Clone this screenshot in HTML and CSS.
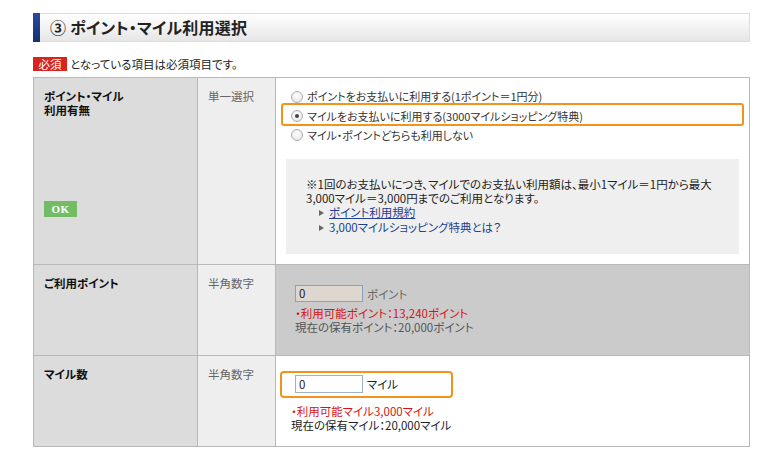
FILE: index.html
```html
<!DOCTYPE html>
<html lang="ja">
<head>
<meta charset="utf-8">
<title>ポイント・マイル利用選択</title>
<link rel="stylesheet" href="styles.css">
</head>
<body>
<div class="page">
  <div class="heading">
    <span class="heading-bar"></span>
    <h2 class="heading-title">③ ポイント・マイル利用選択</h2>
  </div>
  <p class="req-note"><span class="req-badge">必須</span>となっている項目は必須項目です。</p>
  <table class="form-table">
    <colgroup>
      <col class="col-label">
      <col class="col-type">
      <col class="col-field">
    </colgroup>
    <tr class="row-use">
      <th class="label">
        <div class="label-text">ポイント・マイル<br>利用有無</div>
        <span class="ok">OK</span>
      </th>
      <td class="type">単一選択</td>
      <td class="field field-options">
        <div class="option opt-first"><span class="radio"></span>ポイントをお支払いに利用する(1ポイント＝1円分)</div>
        <div class="option opt-selected"><span class="radio checked"></span>マイルをお支払いに利用する(3000マイルショッピング特典)</div>
        <div class="option opt-last"><span class="radio"></span>マイル・ポイントどちらも利用しない</div>
        <div class="note">
          <p class="note-text">※1回のお支払いにつき、マイルでのお支払い利用額は、最小1マイル＝1円から最大<br>3,000マイル＝3,000円までのご利用となります。</p>
          <ul class="note-links">
            <li><a class="link underline" href="#">ポイント利用規約</a></li>
            <li><a class="link" href="#">3,000マイルショッピング特典とは？</a></li>
          </ul>
        </div>
      </td>
    </tr>
    <tr class="row-points">
      <th class="label"><div class="label-text">ご利用ポイント</div></th>
      <td class="type">半角数字</td>
      <td class="field field-points">
        <div class="input-line"><span class="input input-disabled">0</span><span class="unit unit-gray">ポイント</span></div>
        <p class="avail">・利用可能ポイント：13,240ポイント</p>
        <p class="own own-gray">現在の保有ポイント：20,000ポイント</p>
      </td>
    </tr>
    <tr class="row-miles">
      <th class="label"><div class="label-text">マイル数</div></th>
      <td class="type">半角数字</td>
      <td class="field field-miles">
        <div class="input-box"><span class="input input-active">0</span><span class="unit">マイル</span></div>
        <p class="avail avail-miles">・利用可能マイル3,000マイル</p>
        <p class="own">現在の保有マイル：20,000マイル</p>
      </td>
    </tr>
  </table>
</div>
</body>
</html>
```
FILE: styles.css
```css
* { box-sizing: border-box; }
html, body { margin: 0; padding: 0; background: #fff; }
body {
  font-family: "Noto Sans CJK JP", "Noto Sans", sans-serif;
  font-size: 11.5px;
  color: #333;
  font-feature-settings: "palt";
}
.page {
  padding-left: 33px;
  width: 750px;
}
.heading {
  margin-top: 13px;
  height: 29px;
  display: flex;
  align-items: stretch;
  border: 1px solid #dcdcdc;
  border-left: none;
  background: linear-gradient(#ffffff, #e6e6e6);
}
.heading-bar {
  width: 7px;
  margin: -1px 0;
  background: linear-gradient(#2a4aa0, #14306f);
}
.heading-title {
  margin: 0;
  padding-left: 10px;
  font-size: 16px;
  font-weight: bold;
  line-height: 27px;
  color: #222;
  letter-spacing: 0.2px;
}
.req-note {
  margin: 15px 0 0;
  height: 14px;
  display: flex;
  align-items: center;
  line-height: 14px;
  color: #222;
}
.req-badge {
  display: inline-block;
  width: 34px;
  height: 14px;
  margin-right: 3px;
  background: #d8231f;
  color: #fff;
  text-align: center;
  line-height: 14px;
}
.form-table {
  margin-top: 6px;
  width: 717px;
  border-collapse: collapse;
  table-layout: fixed;
  border: 1px solid #b3b3b3;
}
.col-label { width: 164px; }
.col-type { width: 78px; }
.form-table th, .form-table td {
  border: 1px solid #b8b8b8;
  vertical-align: top;
  text-align: left;
  padding: 0;
}
.label {
  background: #dcdcdc;
  padding: 11px 10px 0 !important;
  font-weight: bold;
  color: #111;
  line-height: 14px;
}
.type {
  background: #eeeeee;
  color: #666;
  padding: 11px 10px 0 !important;
  line-height: 14px;
}
.row-use { height: 187px; }
.row-points { height: 91px; }
.row-miles { height: 91px; }
.ok {
  display: block;
  width: 33px;
  height: 16px;
  margin-top: 84px;
  background: #72bd64;
  color: #fff;
  font-family: "Liberation Serif", serif;
  font-weight: bold;
  font-size: 11px;
  line-height: 16px;
  text-align: center;
  letter-spacing: 0.5px;
}
.field-options { padding: 12px 5px 9px !important; }
.option {
  display: flex;
  align-items: center;
  padding-left: 10px;
  color: #333;
  white-space: nowrap;
  font-size: 11px;
}
.opt-first { height: 13px; line-height: 13px; }
.opt-selected {
  height: 23px;
  border: 2px solid #f2931c;
  border-radius: 3px;
  padding-left: 8px;
  padding-top: 3px;
}
.opt-last { height: 16px; padding-top: 2px; }
.radio {
  display: inline-block;
  width: 12px;
  height: 12px;
  border-radius: 50%;
  border: 1px solid #b0b0b0;
  background: radial-gradient(circle at 50% 40%, #ffffff, #e2e2e2);
  margin-right: 4px;
  flex: none;
  position: relative;
}
.radio.checked::after {
  content: "";
  position: absolute;
  left: 3px;
  top: 3px;
  width: 4px;
  height: 4px;
  border-radius: 50%;
  background: #444;
}
.note {
  margin: 17px 5px 0;
  background: #efefef;
  padding: 18px 20px 19px;
}
.note-text {
  margin: 0;
  line-height: 14px;
  color: #222;
  white-space: nowrap;
}
.note-links {
  list-style: none;
  margin: 0;
  padding: 0 0 0 13px;
}
.note-links li {
  line-height: 15px;
  display: flex;
  align-items: center;
}
.note-links li::before {
  content: "";
  width: 0;
  height: 0;
  border-left: 5px solid #666;
  border-top: 3px solid transparent;
  border-bottom: 3px solid transparent;
  margin-right: 5px;
}
.link {
  color: #23408e;
  text-decoration: none;
}
.link.underline { text-decoration: underline; }
.field-points {
  background: #cbcbcb;
  padding: 20px 0 0 19px !important;
}
.input-line {
  display: flex;
  align-items: center;
  height: 17px;
}
.input {
  display: inline-block;
  width: 68px;
  height: 17px;
  padding-left: 3px;
  line-height: 15px;
  color: #222;
}
.input-disabled {
  background: #ddd7cf;
  border: 1px solid #8aa2bb;
}
.input-active {
  height: 18px;
  line-height: 16px;
  background: #fff;
  border: 1px solid #9fb3c8;
}
.unit {
  margin-left: 4px;
  color: #222;
}
.unit-gray { color: #666; }
.avail {
  margin: 4px 0 0;
  line-height: 14px;
  color: #d51414;
}
.own {
  margin: 0;
  line-height: 14px;
  color: #222;
}
.own-gray { color: #555; }
.field-miles { padding: 15px 0 0 4px !important; }
.input-box {
  display: flex;
  align-items: center;
  width: 173px;
  height: 27px;
  border: 2px solid #f2931c;
  border-radius: 4px;
  padding: 2px 0 3px 13px;
}
.avail-miles { margin-top: 6px; padding-left: 11px; }
.field-miles .own { padding-left: 11px; }
```
